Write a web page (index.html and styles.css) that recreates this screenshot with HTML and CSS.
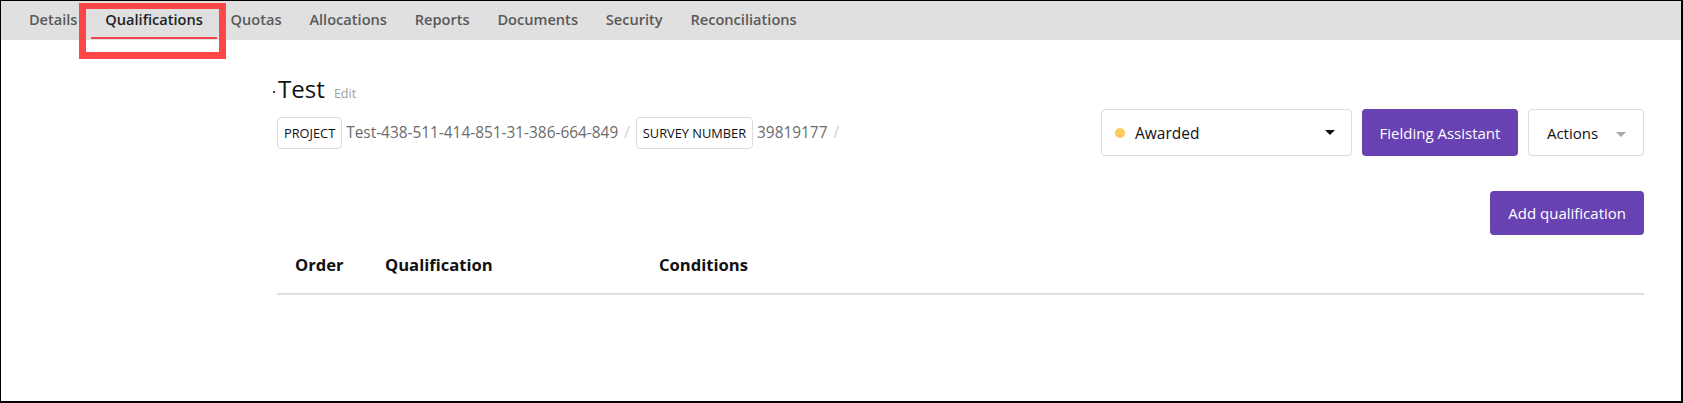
FILE: index.html
```html
<!DOCTYPE html>
<html lang="en">
<head>
    <title>Qualifications</title>
    <link rel="stylesheet" href="styles.css">
</head>
<body>
    <div class="frame">
        <nav class="tabs">
            <a class="tab">Details</a>
            <a class="tab active">Qualifications</a>
            <a class="tab">Quotas</a>
            <a class="tab">Allocations</a>
            <a class="tab">Reports</a>
            <a class="tab">Documents</a>
            <a class="tab">Security</a>
            <a class="tab">Reconciliations</a>
        </nav>
        <div class="highlight"></div>

        <main class="content">
            <div class="page-header">
                <div class="header-left">
                    <h1 class="title"><span class="mark"></span>Test <a class="edit">Edit</a></h1>
                    <div class="meta">
                        <span class="badge">PROJECT</span>
                        <span class="meta-value">Test-438-511-414-851-31-386-664-849</span>
                        <span class="sep">/</span>
                        <span class="badge">SURVEY NUMBER</span>
                        <span class="meta-value">39819177</span>
                        <span class="sep">/</span>
                    </div>
                </div>
                <div class="header-actions">
                    <div class="status-select">
                        <span class="status-dot"></span>
                        <span class="status-label">Awarded</span>
                        <span class="caret"></span>
                    </div>
                    <button class="btn btn-primary">Fielding Assistant</button>
                    <button class="btn btn-outline">Actions <span class="caret caret-light"></span></button>
                </div>
            </div>

            <div class="toolbar">
                <button class="btn btn-primary btn-add">Add qualification</button>
            </div>

            <table class="qual-table">
                <thead>
                    <tr>
                        <th class="col-order">Order</th>
                        <th class="col-qual">Qualification</th>
                        <th>Conditions</th>
                    </tr>
                </thead>
                <tbody></tbody>
            </table>
        </main>
    </div>
</body>
</html>
```

FILE: styles.css
```css
body {
    margin: 0;
    font-family: 'Open Sans', 'Noto Sans', sans-serif;
    color: #212529;
    background-color: white;
}

.frame {
    position: relative;
    height: 403px;
    box-sizing: border-box;
    border: 1px solid #000;
    border-right-width: 2px;
    border-bottom-width: 2px;
    overflow: hidden;
}

/* tab bar */
.tabs {
    display: flex;
    height: 39px;
    padding-left: 14px;
    background-color: #e0e0e0;
}

.tab {
    display: flex;
    align-items: center;
    padding: 0 13.9px;
    font-size: 14.6px;
    font-weight: 600;
    color: #595959;
    border-bottom: 2px solid transparent;
    margin-bottom: 1px;
    cursor: pointer;
}

.tab.active {
    color: #1f1f1f;
    border-bottom-color: #f2434e;
}

/* screenshot annotation */
.highlight {
    position: absolute;
    left: 78px;
    top: 2px;
    width: 133px;
    height: 43px;
    border: 7px solid #ff4646;
    border-top-width: 6px;
}

.content {
    padding: 0 37px 0 276px;
}

.page-header {
    display: flex;
    justify-content: space-between;
    align-items: flex-end;
    margin-top: 34px;
}

.title {
    margin: 0 0 0 -4px;
    font-size: 24px;
    font-weight: 400;
    line-height: 30px;
    color: #111;
}

.mark {
    display: inline-block;
    width: 2px;
    height: 2px;
    margin-right: 3px;
    vertical-align: middle;
    background-color: #333;
}

.edit {
    margin-left: 3px;
    font-size: 12.5px;
    color: #a0a0a0;
    cursor: pointer;
}

.meta {
    display: flex;
    align-items: center;
    height: 47px;
    font-size: 15.4px;
    color: #6c6c6c;
}

.badge {
    padding: 6px 6px;
    border: 1px solid #dcdcdc;
    border-radius: 4px;
    font-size: 12.8px;
    color: #111;
    line-height: 18px;
}

.meta-value {
    margin-left: 4px;
}

.sep {
    margin: 0 6px;
    color: #cfcfcf;
}

.header-actions {
    display: flex;
    gap: 10px;
}

.status-select {
    display: flex;
    align-items: center;
    box-sizing: border-box;
    width: 251px;
    height: 47px;
    padding: 0 16px 0 13px;
    border: 1px solid #dcdcdc;
    border-radius: 4px;
    font-size: 15.5px;
    color: #111;
}

.status-dot {
    width: 10px;
    height: 10px;
    border-radius: 50%;
    background-color: #fdca5c;
    margin-right: 10px;
}

.status-label {
    flex: 1;
}

.caret {
    width: 0;
    height: 0;
    border-left: 5px solid transparent;
    border-right: 5px solid transparent;
    border-top: 5px solid #111;
}

.caret-light {
    display: inline-block;
    margin-left: 14px;
    vertical-align: middle;
    border-top-color: #a8a8a8;
}

.btn {
    height: 47px;
    padding: 0 17.5px;
    border-radius: 4px;
    font-family: inherit;
    font-size: 15px;
    cursor: pointer;
}

.btn-primary {
    background-color: #6842b2;
    color: white;
    border: none;
}

.btn-outline {
    background-color: white;
    color: #111;
    border: 1px solid #dcdcdc;
    padding: 0 17px 0 18px;
}

.btn-primary:hover {
    background-color: #5a379c;
}

.toolbar {
    display: flex;
    justify-content: flex-end;
    margin-top: 35px;
}

.btn-add {
    height: 44px;
    padding: 0 18px;
}

.qual-table {
    width: 100%;
    margin-top: 3px;
    border-collapse: collapse;
}

.qual-table th {
    padding: 15px 18px 16px;
    font-size: 16.6px;
    font-weight: 700;
    line-height: 24px;
    text-align: left;
    color: #111;
    border-bottom: 2px solid #dedede;
}

.col-order {
    width: 54px;
}

.col-qual {
    width: 238px;
}
```
